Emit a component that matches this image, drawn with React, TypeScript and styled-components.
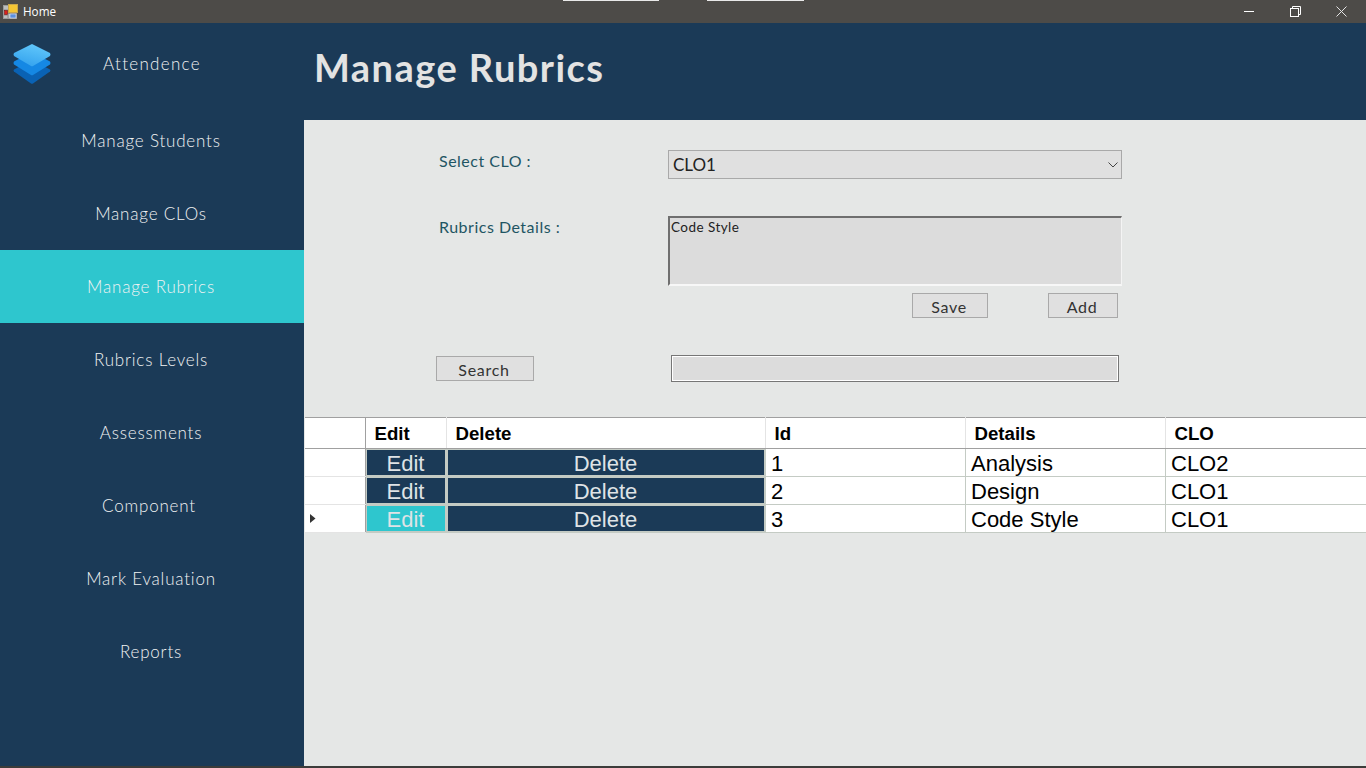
import React from 'react';
import styled, { createGlobalStyle } from 'styled-components';

const GlobalStyle = createGlobalStyle`
  html, body {
    margin: 0;
    padding: 0;
    width: 1366px;
    height: 768px;
    overflow: hidden;
    background: #e5e7e6;
  }
  * { box-sizing: border-box; }
`;

const gothic = `Lato, "Open Sans", "Liberation Sans", sans-serif`;
const navy = '#1b3a57';
const teal = '#2ec6ce';
const gridLine = '#c4cbc4';

const Window = styled.div`
  width: 1366px;
  height: 768px;
  display: flex;
  flex-direction: column;
  border-bottom: 2px solid #3c3c3a;
`;

const TitleBar = styled.div`
  position: relative;
  height: 23px;
  flex: none;
  display: flex;
  align-items: center;
  padding: 0 0 1px 3px;
  background: #4d4b48;
  color: #fff;
  font: 11.7px "Open Sans", sans-serif;
`;

const TitleText = styled.span`
  margin-left: 5px;
`;

const TitleGlint = styled.div<{ $left: number; $width: number }>`
  position: absolute;
  top: 0;
  left: ${p => p.$left}px;
  width: ${p => p.$width}px;
  height: 1px;
  background: #e9e9e9;
`;

const WindowControls = styled.div`
  margin-left: auto;
  display: flex;
  padding-right: 2px;
`;

const ControlButton = styled.div`
  width: 46px;
  height: 23px;
  display: flex;
  align-items: center;
  justify-content: center;
`;

const Body = styled.div`
  flex: 1;
  display: flex;
  min-height: 0;
`;

const Sidebar = styled.nav`
  width: 304px;
  flex: none;
  background: ${navy};
`;

const BrandRow = styled.div`
  position: relative;
  height: 81px;
  display: flex;
  align-items: center;
  justify-content: center;
  color: #f1f2f3;
  font: 300 17px ${gothic};
  letter-spacing: 1.3px;
`;

const BrandLogo = styled.svg`
  position: absolute;
  left: 13px;
  top: 21px;
`;

const NavItem = styled.div<{ $active?: boolean; $shift?: number }>`
  height: 73px;
  display: flex;
  align-items: center;
  justify-content: center;
  padding-right: ${p => p.$shift ?? 2}px;
  background: ${p => (p.$active ? teal : 'transparent')};
  color: #f1f2f3;
  font: 300 17px ${gothic};
  letter-spacing: 0.8px;
`;

const Main = styled.main`
  flex: 1;
  display: flex;
  flex-direction: column;
  background: #e5e7e6;
`;

const Header = styled.header`
  height: 97px;
  flex: none;
  display: flex;
  align-items: center;
  padding: 0 0 10px 10px;
  background: ${navy};
`;

const Title = styled.h1`
  margin: 0;
  color: #e3e3e3;
  font: 700 38px ${gothic};
  letter-spacing: 1.45px;
`;

const Form = styled.section`
  height: 297px;
  flex: none;
  padding: 30px 0 0 132px;
  display: flex;
  flex-direction: column;
`;

const FieldRow = styled.div<{ $height: number }>`
  display: flex;
  height: ${p => p.$height}px;
`;

const FieldLabel = styled.label`
  width: 232px;
  padding: 1px 0 0 3px;
  color: #1f5563;
  font: 400 16px ${gothic};
  letter-spacing: 0.5px;
`;

const SelectBox = styled.div`
  width: 454px;
  height: 29px;
  display: flex;
  align-items: center;
  justify-content: space-between;
  padding: 0 3px 0 4px;
  background: #e0e0e0;
  border: 1px solid #a9a9a9;
  color: #222;
  font: 400 17px ${gothic};
`;

const DetailsBox = styled.div`
  width: 454px;
  height: 70px;
  padding: 1px 1px;
  background: #dcdcdc;
  border-style: solid;
  border-width: 2px 1px 2px 2px;
  border-color: #6f6f6f #f4f4f4 #f7f7f7 #6f6f6f;
  color: #222;
  font: 13.5px ${gothic};
  letter-spacing: 0.45px;
`;

const ActionRow = styled.div`
  display: flex;
  height: 25px;
  margin: 7px 0 0 476px;
`;

const FlatButton = styled.button<{ $width: number; $gap?: number }>`
  width: ${p => p.$width}px;
  height: 25px;
  margin-left: ${p => p.$gap ?? 0}px;
  padding: 2px 2px 0 0;
  background: #e0e0e0;
  border: 1px solid #a9a9a9;
  color: #333;
  font: 400 16px ${gothic};
  letter-spacing: 0.7px;
`;

const SearchRow = styled.div`
  display: flex;
  margin-top: 38px;
`;

const SearchInput = styled.div`
  width: 448px;
  height: 27px;
  margin: -1px 0 0 137px;
  background: #dcdcdc;
  border: 1px solid #767676;
  box-shadow: inset 1px 1px 0 #fff, inset -1px -1px 0 #fff;
`;

const Grid = styled.table`
  width: 1062px;
  margin-left: 1px;
  table-layout: fixed;
  border-collapse: collapse;
  border-top: 1px solid #a0a0a0;
  border-bottom: 1px solid #a0a0a0;
  background: #fff;
  font-family: "Liberation Sans", Arial, sans-serif;
`;

const HeadCell = styled.th<{ $corner?: boolean }>`
  height: 31px;
  padding: 1px 0 0 9px;
  text-align: left;
  color: #000;
  font-size: 18.67px;
  font-weight: 700;
  border-right: 1px solid ${p => (p.$corner ? '#a0a0a0' : '#e4e4e4')};
  border-bottom: 1px solid #a0a0a0;
`;

const RowHeadCell = styled.td`
  padding: 0 0 0 5px;
  border-right: 1px solid #a0a0a0;
  border-bottom: 1px solid #e4e4e4;
  line-height: 0;
`;

const DataCell = styled.td`
  height: 28px;
  padding: 2px 0 0 5.5px;
  color: #000;
  font-size: 22px;
  line-height: 25px;
  border-right: 1px solid ${gridLine};
  border-bottom: 1px solid ${gridLine};
`;

const ActionCell = styled.td`
  height: 28px;
  padding: 1px;
  background: ${gridLine};
  border-right: 1px solid ${gridLine};
  border-bottom: 1px solid ${gridLine};
`;

const CellButton = styled.div<{ $active?: boolean }>`
  height: 25px;
  padding-top: 2px;
  display: flex;
  align-items: center;
  justify-content: center;
  background: ${p => (p.$active ? teal : navy)};
  color: #dfe3e6;
  font-size: 22px;
`;

const NAV = ['Manage Students', 'Manage CLOs', 'Manage Rubrics', 'Rubrics Levels', 'Assessments', 'Component', 'Mark Evaluation', 'Reports'];

const ROWS = [
  { id: 1, details: 'Analysis', clo: 'CLO2' },
  { id: 2, details: 'Design', clo: 'CLO1' },
  { id: 3, details: 'Code Style', clo: 'CLO1' },
];

const AppIcon = () => (
  <svg width="15" height="15" viewBox="0 0 15 15">
    <rect x="0.5" y="1.5" width="13" height="13" fill="#bdbdbd" stroke="#9a9a9a" />
    <path d="M1 6H5M1 11H5M5 6V14M5 9.500H14" stroke="#8a8a8a" fill="none" />
    <rect x="5.500" y="0.500" width="9" height="8" fill="#f4c534" stroke="#c9a64a" />
    <rect x="1.500" y="6.500" width="3" height="4" fill="#d9231c" stroke="#7d1512" strokeWidth="0.6" />
    <rect x="7" y="10" width="6" height="4" fill="#5b8fe0" stroke="#dfe6f2" strokeWidth="0.6" />
  </svg>
);

const LayersLogo = () => (
  <BrandLogo width="38" height="40" viewBox="0 0 38 40">
    <defs>
      <linearGradient id="layerTop" x1="0.7" y1="0" x2="0.3" y2="1">
        <stop offset="0" stopColor="#62c8fb" />
        <stop offset="1" stopColor="#33a2ee" />
      </linearGradient>
    </defs>
    <path d="M19 16 L37 25.500 Q38 26.500 37 27.500 L20 39.500 Q19 40 18 39.500 L1 27.500 Q0 26.500 1 25.500 Z" fill="#0a62b4" />
    <path d="M19 8 L37 17.500 Q38 19 37 20.500 L20 31 Q19 31.500 18 31 L1 20.500 Q0 19 1 17.500 Z" fill="#1588e4" />
    <path d="M19 0 L37 9 Q38 10.500 37 12 L20 22 Q19 22.500 18 22 L1 12 Q0 10.500 1 9 Z" fill="url(#layerTop)" />
  </BrandLogo>
);

export default function App() {
  return (
    <>
      <GlobalStyle />
      <Window>
        <TitleBar>
          <AppIcon />
          <TitleText>Home</TitleText>
          <TitleGlint $left={563} $width={96} />
          <TitleGlint $left={707} $width={97} />
          <WindowControls>
            <ControlButton>
              <svg width="10" height="10" viewBox="0 0 10 10"><path d="M0 5.500H10" stroke="#fff" /></svg>
            </ControlButton>
            <ControlButton>
              <svg width="11" height="11" viewBox="0 0 11 11" fill="none" stroke="#fff"><rect x="0.500" y="2.500" width="8" height="8" /><path d="M2.500 2.500V0.500H10.500V8.500H8.500" /></svg>
            </ControlButton>
            <ControlButton>
              <svg width="11" height="11" viewBox="0 0 11 11" stroke="#e4e4e4"><path d="M0.500 0.500L10.500 10.500M10.500 0.500L0.500 10.500" /></svg>
            </ControlButton>
          </WindowControls>
        </TitleBar>
        <Body>
          <Sidebar>
            <BrandRow>
              <LayersLogo />
              Attendence
            </BrandRow>
            {NAV.map(label => (
              <NavItem key={label} $active={label === 'Manage Rubrics'} $shift={label === 'Component' ? 6 : 2}>
                {label}
              </NavItem>
            ))}
          </Sidebar>
          <Main>
            <Header>
              <Title>Manage Rubrics</Title>
            </Header>
            <Form>
              <FieldRow $height={66}>
                <FieldLabel>Select CLO :</FieldLabel>
                <SelectBox>
                  CLO1
                  <svg width="10" height="6" viewBox="0 0 10 6" fill="none" stroke="#444"><path d="M0.500 0.500L5 5L9.500 0.500" /></svg>
                </SelectBox>
              </FieldRow>
              <FieldRow $height={70}>
                <FieldLabel>Rubrics Details :</FieldLabel>
                <DetailsBox>Code Style</DetailsBox>
              </FieldRow>
              <ActionRow>
                <FlatButton $width={76}>Save</FlatButton>
                <FlatButton $width={70} $gap={60}>Add</FlatButton>
              </ActionRow>
              <SearchRow>
                <FlatButton $width={98}>Search</FlatButton>
                <SearchInput />
              </SearchRow>
            </Form>
            <Grid>
              <colgroup>
                <col width={60} />
                <col width={81} />
                <col width={319} />
                <col width={200} />
                <col width={200} />
                <col width={202} />
              </colgroup>
              <thead>
                <tr>
                  <HeadCell $corner />
                  <HeadCell>Edit</HeadCell>
                  <HeadCell>Delete</HeadCell>
                  <HeadCell>Id</HeadCell>
                  <HeadCell>Details</HeadCell>
                  <HeadCell>CLO</HeadCell>
                </tr>
              </thead>
              <tbody>
                {ROWS.map(row => (
                  <tr key={row.id}>
                    <RowHeadCell>
                      {row.id === 3 && (
                        <svg width="6" height="9" viewBox="0 0 6 9"><path d="M0 0L5.500 4.500L0 9Z" fill="#333" /></svg>
                      )}
                    </RowHeadCell>
                    <ActionCell><CellButton $active={row.id === 3}>Edit</CellButton></ActionCell>
                    <ActionCell><CellButton>Delete</CellButton></ActionCell>
                    <DataCell>{row.id}</DataCell>
                    <DataCell>{row.details}</DataCell>
                    <DataCell>{row.clo}</DataCell>
                  </tr>
                ))}
              </tbody>
            </Grid>
          </Main>
        </Body>
      </Window>
    </>
  );
}
